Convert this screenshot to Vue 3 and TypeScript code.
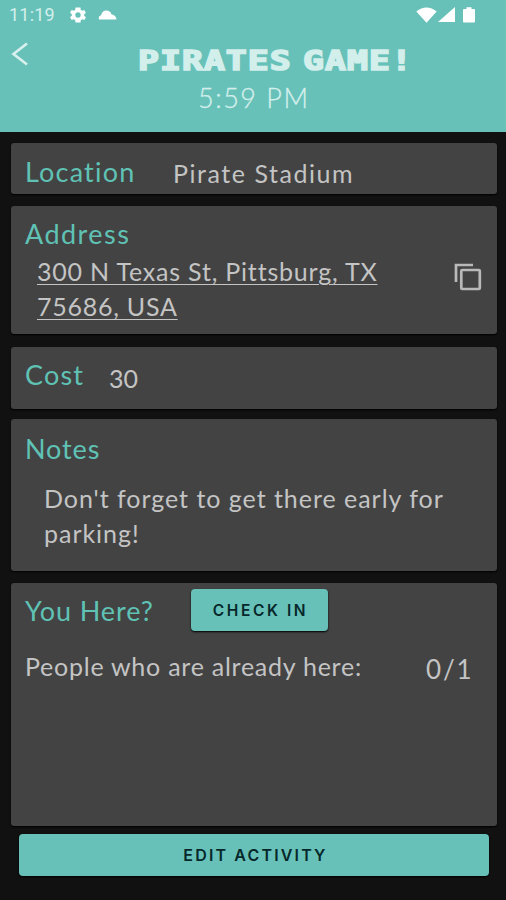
<script setup lang="ts">
import { ref } from 'vue'

const activity = {
  title: 'PIRATES GAME!',
  time: '5:59 PM',
  location: 'Pirate Stadium',
  address: ['300 N Texas St, Pittsburg, TX', '75686, USA'],
  cost: 30,
  notes: ["Don't forget to get there early for", 'parking!'],
  attendees: 1,
}
const checkedIn = ref(0)

function checkIn(): void {
  checkedIn.value = Math.min(checkedIn.value + 1, activity.attendees)
}
</script>

<template>
  <main class="screen">
    <header class="header">
      <div class="status">
        <span class="clock">11:19</span>
        <svg class="gear" viewBox="0 0 24 24" width="20" height="20">
          <path fill="#fff" fill-rule="evenodd" d="M19.4 13a7.500 7.500 0 0 0 0-2l2.100-1.600-2-3.500-2.500 1a7.500 7.500 0 0 0-1.700-1L15 3H9l-.4 2.900a7.500 7.500 0 0 0-1.700 1l-2.500-1-2 3.500L4.600 11a7.500 7.500 0 0 0 0 2l-2.200 1.600 2 3.500 2.500-1a7.500 7.500 0 0 0 1.700 1L9 21h6l.4-2.900a7.500 7.500 0 0 0 1.700-1l2.500 1 2-3.500zM12 15.200a3.200 3.200 0 1 1 0-6.400 3.200 3.200 0 0 1 0 6.400z" />
        </svg>
        <svg class="cloud" viewBox="0 0 19 10" width="19" height="10">
          <path fill="#fff" d="M1 9.500Q-.2 6.500 3 5.300 4.300.6 8 .5q4.400-.1 5.400 3.700Q18 5.200 18.500 9.500z" />
        </svg>
        <svg class="wifi" viewBox="0 0 21 16" width="21" height="16">
          <path fill="#fff" d="M.3 4.500Q10.500-3.500 20.700 4.500L10.500 15.800z" />
        </svg>
        <svg class="signal" viewBox="0 0 17 15" width="17" height="15">
          <path fill="#fff" d="M17 0v15H0z" />
        </svg>
        <svg class="battery" viewBox="0 0 12 16" width="12" height="16">
          <path fill="#fff" d="M3.500 2V.3h5V2H11q1 0 1 1v11.500q0 1-1 1H1q-1 0-1-1V3q0-1 1-1z" />
        </svg>
      </div>
      <div class="titles">
        <svg class="back" viewBox="0 0 18 24" width="18" height="24">
          <path d="M16 1.500 2.500 12 16 22.500" fill="none" stroke="#d8f0ed" stroke-width="2.700" />
        </svg>
        <h1 class="title">{{ activity.title }}</h1>
      </div>
      <p class="time">{{ activity.time }}</p>
    </header>

    <section class="card location">
      <h2 class="label">Location</h2>
      <p class="value place">{{ activity.location }}</p>
    </section>

    <section class="card address">
      <div>
        <h2 class="label">Address</h2>
        <p class="value lines">
          <span class="street">{{ activity.address[0] }}</span>
          <span class="zip">{{ activity.address[1] }}</span>
        </p>
      </div>
      <svg class="copy" viewBox="0 0 28 28" width="28" height="28">
        <path d="M2 19V2h17" fill="none" stroke="#b9b9b9" stroke-width="2.700" />
        <rect x="7.300" y="7" width="18.500" height="19" rx="1" fill="none" stroke="#b9b9b9" stroke-width="2.700" />
      </svg>
    </section>

    <section class="card cost">
      <h2 class="label">Cost</h2>
      <p class="value amount">{{ activity.cost }}</p>
    </section>

    <section class="card notes">
      <h2 class="label">Notes</h2>
      <p class="value message">
        <span class="first">{{ activity.notes[0] }}</span>
        <span class="second">{{ activity.notes[1] }}</span>
      </p>
    </section>

    <section class="card here">
      <div class="row">
        <h2 class="label">You Here?</h2>
        <button class="btn check" @click="checkIn">CHECK IN</button>
      </div>
      <div class="row people">
        <p class="value who">People who are already here:</p>
        <p class="value count">{{ checkedIn }}/{{ activity.attendees }}</p>
      </div>
    </section>

    <button class="btn edit">EDIT ACTIVITY</button>
  </main>
</template>

<style>
body {
  margin: 0;
  background: #111;
}
</style>

<style scoped>
.screen {
  box-sizing: border-box;
  width: 506px;
  height: 900px;
  background: #111;
  font-family: Lato, 'Open Sans', sans-serif;
  color: #c4c4c4;
  overflow: hidden;
}
h1, h2, p { margin: 0; font-weight: 400; white-space: nowrap; }
svg { display: block; flex: none; }
.header { height: 132px; background: #67c1b8; color: #d3efec; }
.status { display: flex; align-items: center; height: 29px; padding-left: 9px; }
.clock { width: 59px; font: 400 18px/29px Roboto, sans-serif; letter-spacing: .2px; }
.cloud { margin-left: 10px; }
.wifi { margin-left: 299px; }
.signal { margin-left: 1px; }
.battery { margin-left: 8px; }
.titles { display: flex; height: 53px; padding-left: 11px; }
.back { margin-top: 13px; }
.title {
  margin-left: 109px;
  font: 700 26px/65px 'DejaVu Sans Mono', monospace;
  letter-spacing: .8px;
  word-spacing: -8px;
  -webkit-text-stroke: 1.600px #d3efec;
  transform: scaleX(1.335);
  transform-origin: left;
}
.time { margin-left: 198px; font-size: 27px; line-height: 32px; font-weight: 300; letter-spacing: 1.500px; -webkit-text-stroke: .3px #d3efec; }
.card {
  box-sizing: border-box;
  width: 486px;
  margin-left: 11px;
  padding-left: 14px;
  border-radius: 3px;
  background: #434343;
  box-shadow: 0 1px 2px #000;
}
.label { font-size: 27px; line-height: 32px; color: #5fc2b5; letter-spacing: .9px; }
.value { font-size: 25px; line-height: 35px; letter-spacing: .9px; }
.location { display: flex; height: 51px; margin-top: 11px; padding-top: 13px; }
.location .label { width: 148px; letter-spacing: 1.200px; }
.location .place { letter-spacing: 1.550px; }
.address { display: flex; justify-content: space-between; height: 128px; margin-top: 12px; padding: 12px 15px 0 14px; }
.address .label { letter-spacing: 1.450px; }
.lines { display: flex; flex-direction: column; align-items: flex-start; margin: 4px 0 0 12px; letter-spacing: .8px; }
.lines span { text-decoration: underline; text-decoration-thickness: 1px; text-underline-offset: 3px; }
.zip { letter-spacing: .75px; }
.copy { margin-top: 45px; }
.cost { display: flex; height: 62px; margin-top: 13px; padding-top: 12px; }
.cost .label { width: 84px; letter-spacing: 1.200px; }
.cost .amount { margin-top: 2px; letter-spacing: 0; }
.notes { height: 152px; margin-top: 10px; padding-top: 14px; }
.message { display: flex; flex-direction: column; align-items: flex-start; margin: 16px 0 0 19px; letter-spacing: .97px; }
.here { height: 243px; margin-top: 12px; padding-top: 6px; }
.row { display: flex; }
.here .label { width: 166px; line-height: 44px; }
.btn {
  box-sizing: border-box;
  display: flex;
  align-items: center;
  justify-content: center;
  padding: 0;
  border: 0;
  border-radius: 4px;
  background: #67c1b8;
  color: #06282a;
  box-shadow: 0 1px 2px #000;
  white-space: nowrap;
}
.check { width: 137px; height: 42px; font: 600 15.500px Inter, sans-serif; letter-spacing: 2.600px; padding-left: 2px; }
.people { margin-top: 16px; }
.who { width: 401px; letter-spacing: .75px; }
.people .count { margin-top: 3px; font-size: 26px; letter-spacing: 1.800px; }
.edit { width: 470px; height: 42px; margin: 8px 0 0 19px; font: 600 16px Inter, sans-serif; letter-spacing: 2.150px; padding-left: 3px; }
</style>
